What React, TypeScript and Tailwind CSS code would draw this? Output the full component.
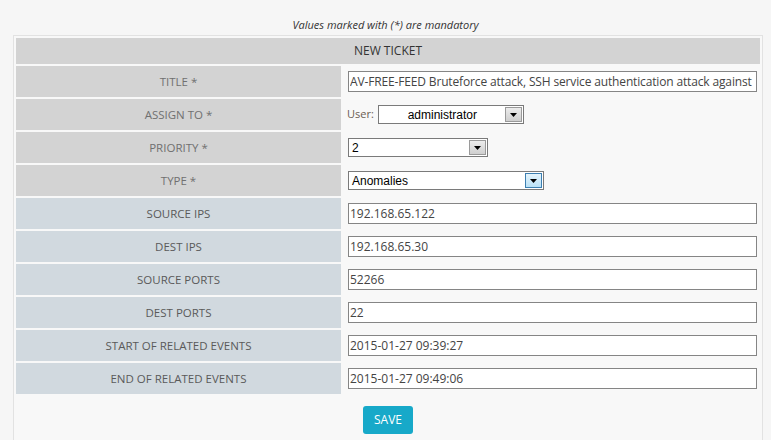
import React from 'react';

interface IField {
  label: string;
  value: string;
  mandatory?: boolean;
}

const textFields: IField[] = [
  { label: 'SOURCE IPS', value: '192.168.65.122' },
  { label: 'DEST IPS', value: '192.168.65.30' },
  { label: 'SOURCE PORTS', value: '52266' },
  { label: 'DEST PORTS', value: '22' },
  { label: 'START OF RELATED EVENTS', value: '2015-01-27 09:39:27' },
  { label: 'END OF RELATED EVENTS', value: '2015-01-27 09:49:06' },
];

const Arrow = ({ focused }: { focused?: boolean }) => (
  <div
    className={
      focused
        ? 'flex h-full w-[17px] items-center justify-center border border-[#3c7fb1] bg-gradient-to-b from-[#e5f4fc] to-[#b9e1f6]'
        : 'flex h-full w-[17px] items-center justify-center border border-[#9a9a9a] bg-gradient-to-b from-[#ececec] to-[#cfcfcf]'
    }
  >
    <svg width="7" height="4" viewBox="0 0 7 4">
      <path d="M0 0h7L3.5 4z" fill="#000" />
    </svg>
  </div>
);

const Select = ({
  value,
  width,
  center,
  focused,
}: {
  value: string;
  width: string;
  center?: boolean;
  focused?: boolean;
}) => (
  <div
    className={`flex h-[19px] items-center border border-[#7a7a7a] bg-white p-px font-['Liberation_Sans',sans-serif] text-[12px] text-black ${width}`}
  >
    <span className={center ? 'flex-1 text-center' : 'flex-1 pl-[2px]'}>{value}</span>
    <Arrow focused={focused} />
  </div>
);

const Label = ({ text, mandatory }: { text: string; mandatory?: boolean }) => (
  <div
    className={
      mandatory
        ? 'flex h-[31px] items-center justify-center bg-[#d3d3d3] text-[11.5px] text-[#707070]'
        : 'flex h-[31px] items-center justify-center bg-[#d1d9df] text-[11.5px] text-[#5a5a5a]'
    }
  >
    {text}
  </div>
);

const TextInput = ({ value, tight }: { value: string; tight?: boolean }) => (
  <input
    readOnly
    value={value}
    className={`h-[21px] w-[409px] border border-[#858585] bg-white px-px font-['Open_Sans',sans-serif] text-[12px] text-[#444] outline-none ${
      tight ? 'tracking-[-0.15px] text-[#333]' : ''
    }`}
  />
);

export default function App() {
  return (
    <div className="min-h-[440px] bg-[#f6f6f6] font-['Open_Sans',sans-serif]">
      <div className="pt-[17px] text-center text-[11px] italic leading-[16px] text-[#333]">
        Values marked with (*) are mandatory
      </div>
      <div className="ml-[13px] mt-[2px] w-[750px] border border-[#e2e2e2] bg-[#f8f8f8] p-[2px] pb-[40px]">
        <div className="flex h-[26px] items-center justify-center bg-[#d3d3d3] text-[12px] text-[#333]">
          NEW TICKET
        </div>
        <div className="mt-[2px] grid grid-cols-[325px_417px] gap-[2px]">
          <Label text="TITLE *" mandatory />
          <div className="flex items-center pl-[5px]">
            <TextInput
              tight
              value="AV-FREE-FEED Bruteforce attack, SSH service authentication attack against DST_IP"
            />
          </div>

          <Label text="ASSIGN TO *" mandatory />
          <div className="flex items-center gap-[4px] pl-[4px]">
            <span className="text-[11px] text-[#6a5d52]">User:</span>
            <Select value="administrator" width="w-[146px]" center />
          </div>

          <Label text="PRIORITY *" mandatory />
          <div className="flex items-center pl-[5px]">
            <Select value="2" width="w-[140px]" />
          </div>

          <Label text="TYPE *" mandatory />
          <div className="flex items-center pl-[5px]">
            <Select value="Anomalies" width="w-[196px]" focused />
          </div>

          {textFields.map((f) => (
            <React.Fragment key={f.label}>
              <Label text={f.label} />
              <div className="flex items-center pl-[5px]">
                <TextInput value={f.value} />
              </div>
            </React.Fragment>
          ))}
        </div>
        <div className="mt-[12px] flex justify-center">
          <button
            type="button"
            className="h-[28px] w-[50px] rounded-[3px] bg-[#17a9c9] text-[12px] text-white"
          >
            SAVE
          </button>
        </div>
      </div>
    </div>
  );
}
